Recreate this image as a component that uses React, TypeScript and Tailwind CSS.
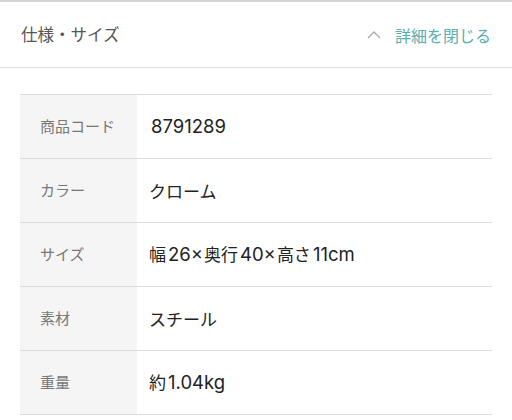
const specs = [
  { label: "商品コード", value: "8791289" },
  { label: "カラー", value: "クローム" },
  { label: "サイズ", value: "幅26×奥行40×高さ11cm" },
  { label: "素材", value: "スチール" },
  { label: "重量", value: "約1.04kg" },
];

// latin runs are set a bit larger so they sit like the original's Hiragino digits
function Value({ text }: { text: string }) {
  const parts = text.split(/([0-9a-z.×]+)/).filter(Boolean);
  return (
    <>
      {parts.map((p, i) =>
        /[0-9a-z.×]/.test(p) ? (
          <span key={i} className="text-[18.5px] ml-[2px] mr-[1px]" style={{ fontFamily: "Inter, sans-serif" }}>
            {p}
          </span>
        ) : (
          <span key={i}>{p}</span>
        )
      )}
    </>
  );
}

export default function App() {
  return (
    <div
      className="w-[512px] h-[420px] overflow-hidden bg-white"
      style={{ fontFamily: '"Noto Sans CJK JP", "Noto Sans", sans-serif' }}
    >
      <div className="border-t-2 border-[#d4d4d4] border-b border-b-[#dcdcdc] h-[68px] flex items-center justify-between pl-[21px] pr-[21px]">
        <span className="text-[16.5px] text-[#555]">仕様・サイズ</span>
        <button className="flex items-center gap-[14px] text-[16px] text-[#5aaeae]">
          <svg width="14" height="9" viewBox="0 0 14 9" fill="none">
            <path d="M1 8 L7 2 L13 8" stroke="#aaa" strokeWidth="1.3" />
          </svg>
          詳細を閉じる
        </button>
      </div>

      <div className="mx-[20px] mt-[26px] border-t border-[#dcdcdc]">
        {specs.map((s) => (
          <div key={s.label} className="flex h-[64px] border-b border-[#dcdcdc]">
            <div className="w-[117px] bg-[#f5f5f5] flex items-center pl-[20px] text-[15px] text-[#777]">
              {s.label}
            </div>
            <div className="flex-1 flex items-center pl-[14px] text-[17px] text-[#222] whitespace-pre">
              <span className="-ml-[2px]">
                <Value text={s.value} />
              </span>
            </div>
          </div>
        ))}
      </div>
    </div>
  );
}
